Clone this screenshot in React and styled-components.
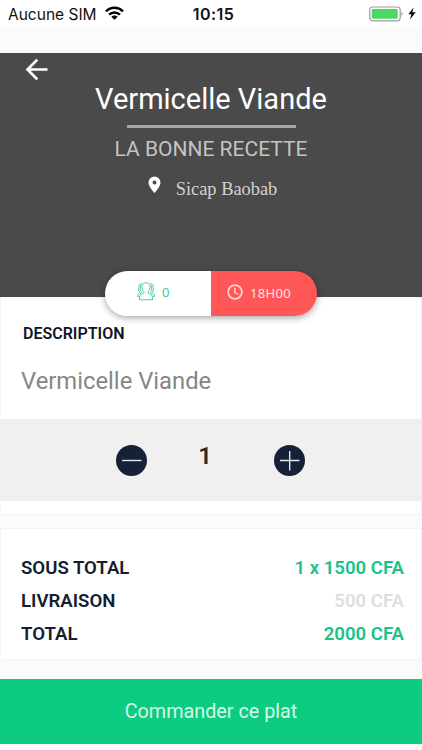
import React from "react";
import styled, { createGlobalStyle } from "styled-components";

const GlobalStyle = createGlobalStyle`
  * { box-sizing: border-box; }
  body { margin: 0; background: #fbfbfb; font-family: Roboto, "Liberation Sans", sans-serif; overflow: hidden; }
`;

const Screen = styled.main`
  width: 422px;
  height: 750px;
  display: flex;
  flex-direction: column;
  background: #fbfbfb;
`;

const StatusBar = styled.header`
  height: 27px;
  margin-bottom: 26px;
  padding: 1px 6px 0 8px;
  display: grid;
  grid-template-columns: 1fr auto 1fr;
  align-items: center;
  background: #fff;
  font-family: Inter, sans-serif;
  font-size: 15.5px;
  color: #111;
`;

const Carrier = styled.div`
  display: flex;
  align-items: center;
  gap: 8px;
  svg { margin-top: -2px; }
`;

const Clock = styled.div`
  padding-left: 3px;
  font-weight: 600;
  font-size: 16px;
  letter-spacing: 0.5px;
`;

const Power = styled.div`
  display: flex;
  align-items: center;
  justify-content: flex-end;
  gap: 4px;
  padding-bottom: 1px;
`;

const Hero = styled.section`
  position: relative;
  height: 244px;
  flex: none;
  display: flex;
  flex-direction: column;
  align-items: center;
  background: #4a4a4a;
`;

const BackButton = styled.button`
  align-self: flex-start;
  margin: 5px 0 0 24px;
  padding: 0;
  width: 25px;
  height: 24px;
  border: 0;
  background: none;
  svg { display: block; }
`;

const Title = styled.h1`
  margin: 0;
  font-size: 29px;
  line-height: 34px;
  font-weight: 400;
  color: #fff;
`;

const Rule = styled.div`
  width: 169px;
  height: 3px;
  margin-top: 9px;
  background: #a6a6a6;
`;

const Restaurant = styled.h2`
  margin: 8px 0 0;
  font-size: 21px;
  line-height: 26px;
  font-weight: 400;
  color: #c4c4c4;
`;

const Place = styled.div`
  display: flex;
  align-items: flex-start;
  gap: 15px;
  margin-top: 14px;
  padding-left: 3px;
  font-family: "Liberation Serif", serif;
  font-size: 18.4px;
  line-height: 22px;
  color: #d2d2d2;
`;

const PlaceName = styled.span`
  padding-top: 2px;
`;

const Pill = styled.div`
  position: absolute;
  left: 105px;
  top: 218px;
  width: 212px;
  height: 45px;
  display: flex;
  overflow: hidden;
  border-radius: 23px;
  box-shadow: 0 2px 7px rgba(0, 0, 0, 0.35);
`;

const PillHalf = styled.div`
  flex: none;
  width: 50%;
  display: flex;
  align-items: center;
  gap: 7px;
  padding: ${(p) => (p.$alert ? "0 0 4px 16px" : "0 0 4px 32px")};
  font-family: "Noto Sans", sans-serif;
  font-size: 13px;
  line-height: 18px;
  letter-spacing: 0.3px;
  color: ${(p) => (p.$alert ? "#ffe3e3" : "#3ecb96")};
  background: ${(p) => (p.$alert ? "#ff5757" : "#fff")};
`;

const PillText = styled.span`
  padding-top: ${(p) => (p.$low ? "2px" : "0")};
`;

const Card = styled.section`
  flex: none;
  border: 1px solid #f4f4f4;
  background: #fff;
`;

const Description = styled(Card)`
  height: 122px;
  padding: 25px 20px 0;
  border-bottom: 0;
`;

const SectionTitle = styled.h3`
  margin: 0 0 0 2px;
  font-size: 16px;
  line-height: 22px;
  font-weight: 600;
  color: #10162a;
`;

const DescriptionText = styled.p`
  margin: 22px 0 0;
  font-size: 23.8px;
  line-height: 28px;
  color: #868686;
`;

const Quantity = styled.section`
  flex: none;
  height: 82px;
  display: flex;
  justify-content: center;
  align-items: center;
  padding-right: 1px;
  background: #f0f0f0;
`;

const RoundButton = styled.button`
  width: 31px;
  height: 31px;
  padding: 0;
  border: 0;
  border-radius: 50%;
  background: #162036;
  svg { display: block; }
`;

const Count = styled.div`
  width: 127px;
  padding: 0 11px 8px 0;
  text-align: center;
  font-size: 24px;
  line-height: 28px;
  font-weight: 600;
  color: #2d2d2d;
`;

const Spacer = styled(Card)`
  height: 14px;
  border-top: 0;
`;

const Totals = styled(Card)`
  height: 132px;
  margin-top: 13px;
  padding: 22px 17px 0 20px;
`;

const TotalRow = styled.div`
  height: 33px;
  display: flex;
  justify-content: space-between;
  align-items: center;
  font-size: 18.6px;
  line-height: 22px;
  font-weight: 600;
  color: #161d30;
`;

const Amount = styled.span`
  color: ${(p) => (p.$muted ? "#dedede" : "#1bc286")};
`;

const OrderButton = styled.button`
  flex: none;
  height: 65px;
  margin-top: 19px;
  padding: 0 0 1px;
  border: 0;
  background: #0ccc82;
  color: #d6f8e9;
  font-family: inherit;
  font-size: 19.8px;
`;

const WifiIcon = () => (
  <svg width="19" height="14" viewBox="0 0 19 14" fill="none" stroke="#000" strokeWidth="2.5">
    <path d="M1 5.300C5.800.600 13.200.600 18 5.300" />
    <path d="M4.100 8.600c3-2.900 7.800-2.900 10.800 0" />
    <path d="M6.300 10.700C8 9 11 9 12.700 10.700L9.500 13.800z" fill="#000" stroke="none" />
  </svg>
);

const BatteryIcon = () => (
  <svg width="35" height="16" viewBox="0 0 35 16">
    <rect x=".7" y="1" width="30.5" height="13.8" rx="3" fill="#fff" stroke="#9b9b9b" strokeWidth="1.2" />
    <rect x="2.7" y="3" width="26" height="9.8" rx="1" fill="#4bd763" />
    <path d="M32.500 5.500q2 2.400 0 4.800z" fill="#8b8b8b" />
  </svg>
);

const BoltIcon = () => (
  <svg width="8" height="13" viewBox="0 0 8 13">
    <path d="M5.500.500.300 7.300h3L2 12.500 7.800 5.300H4.500z" fill="#111" />
  </svg>
);

const BackIcon = () => (
  <svg width="25" height="24" viewBox="0 0 25 24" fill="none" stroke="#fff" strokeWidth="2.7">
    <path d="M23.500 11.500H4M13.300 1.600 3.500 11.500l9.800 9.900" />
  </svg>
);

const PinIcon = () => (
  <svg width="13" height="18" viewBox="0 0 13 18">
    <path fillRule="evenodd" d="M6.500.500a6 6 0 0 0-6 6c0 4.300 6 10.500 6 10.500s6-6.200 6-10.500a6 6 0 0 0-6-6zm0 3.900a2 2 0 1 1 0 4 2 2 0 0 1 0-4z" fill="#fff" />
  </svg>
);

const GroupIcon = () => (
  <svg width="18" height="19" viewBox="0 0 18 19" fill="none" stroke="#52cfa0" strokeWidth="1">
    <path d="M9 .8c-3 0-4.300 1.800-3.900 4.500.2 2.500 1.100 3.500 2.200 4.700-.1 2.400-4.800 2.200-4.800 5v2.800h13V15c0-2.800-4.700-2.600-4.800-5 1.100-1.200 2-2.200 2.200-4.700C13.300 2.600 12 .8 9 .8z" />
    <path d="M5 1.800C2.800 1.500 1.600 2.700 2 5l-.7 3.500L2.900 10c0 1.400-2.300 1.200-2.400 4.400h2M3.300 3l.5 3-1 2 2 2.500-2.300 2M13 1.800c2.200-.3 3.400.9 3 3.200l.7 3.500-1.600 1.500c0 1.400 2.300 1.200 2.400 4.400h-2M14.700 3l-.5 3 1 2-2 2.500 2.300 2" />
  </svg>
);

const ClockIcon = () => (
  <svg width="16" height="16" viewBox="0 0 16 16" fill="none" stroke="#ffd5d5" strokeWidth="1.8">
    <circle cx="8" cy="8" r="6.9" />
    <path d="M7.800 3.700v4.600l3.500 2" strokeWidth="1.4" />
  </svg>
);

const StepIcon = ({ plus }) => (
  <svg width="31" height="31" viewBox="0 0 31 31" stroke="#e3e7ef" strokeWidth="1.4">
    <path d={plus ? "M6 15.500h19.500M15.700 6v19.500" : "M6 15.500h19.500"} />
  </svg>
);

const totals = [
  { label: "SOUS TOTAL", amount: "1 x 1500 CFA" },
  { label: "LIVRAISON", amount: "500 CFA", muted: true },
  { label: "TOTAL", amount: "2000 CFA" },
];

export default function App() {
  return (
    <Screen>
      <GlobalStyle />
      <StatusBar>
        <Carrier>Aucune SIM <WifiIcon /></Carrier>
        <Clock>10:15</Clock>
        <Power><BatteryIcon /><BoltIcon /></Power>
      </StatusBar>
      <Hero>
        <BackButton aria-label="Retour"><BackIcon /></BackButton>
        <Title>Vermicelle Viande</Title>
        <Rule />
        <Restaurant>LA BONNE RECETTE</Restaurant>
        <Place><PinIcon /><PlaceName>Sicap Baobab</PlaceName></Place>
        <Pill>
          <PillHalf><GroupIcon /><PillText>0</PillText></PillHalf>
          <PillHalf $alert><ClockIcon /><PillText $low>18H00</PillText></PillHalf>
        </Pill>
      </Hero>
      <Description>
        <SectionTitle>DESCRIPTION</SectionTitle>
        <DescriptionText>Vermicelle Viande</DescriptionText>
      </Description>
      <Quantity>
        <RoundButton aria-label="Moins"><StepIcon /></RoundButton>
        <Count>1</Count>
        <RoundButton aria-label="Plus"><StepIcon plus /></RoundButton>
      </Quantity>
      <Spacer />
      <Totals>
        {totals.map((t) => (
          <TotalRow key={t.label}>
            {t.label}
            <Amount $muted={t.muted}>{t.amount}</Amount>
          </TotalRow>
        ))}
      </Totals>
      <OrderButton>Commander ce plat</OrderButton>
    </Screen>
  );
}
